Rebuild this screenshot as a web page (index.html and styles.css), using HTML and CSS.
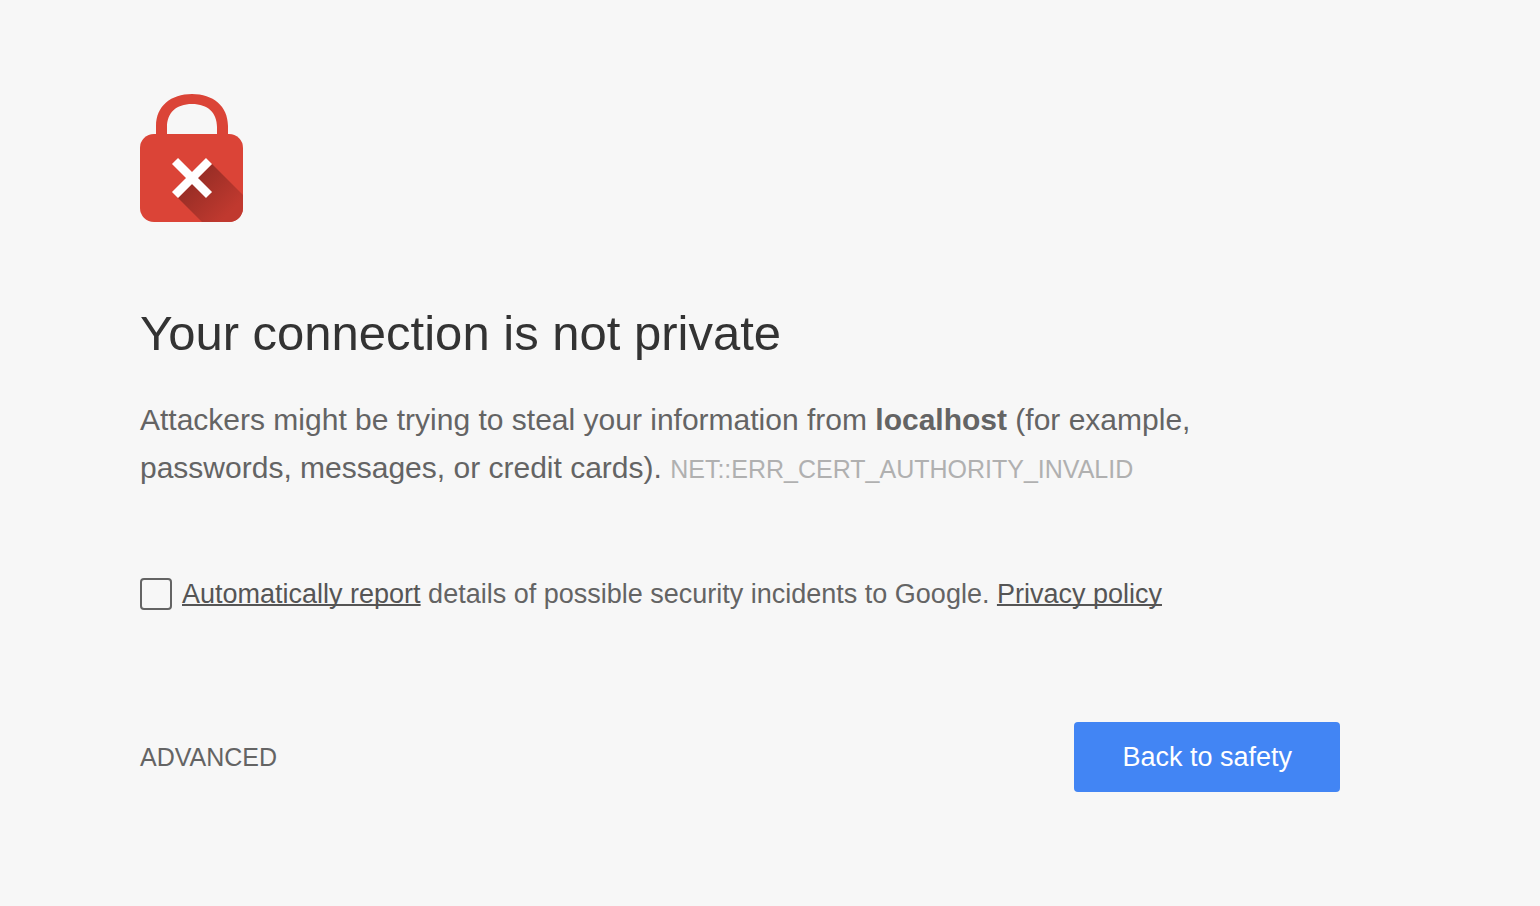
FILE: index.html
```html
<!DOCTYPE html>
<html lang="en">
<head>
    <meta charset="UTF-8">
    <meta name="viewport" content="width=device-width, initial-scale=1.0">
    <title>Privacy error</title>
    <link rel="stylesheet" href="styles.css">
</head>
<body>
    <main class="interstitial">
        <svg class="icon" viewBox="0 0 104 128" aria-hidden="true">
            <defs>
                <linearGradient id="shadow" gradientUnits="userSpaceOnUse" x1="52" y1="84" x2="88" y2="120">
                    <stop offset="0" stop-color="#962d25"/>
                    <stop offset="1" stop-color="#c0392f"/>
                </linearGradient>
                <clipPath id="lockBody">
                    <rect y="40" width="103" height="88" rx="14"/>
                </clipPath>
            </defs>
            <path d="M16 42V32C16 12 31 0 52 0s36 12 36 32v10H77V33C77 19 68 10 52 10S27 19 27 33v9z" fill="#db4437"/>
            <rect y="40" width="103" height="88" rx="14" fill="#db4437"/>
            <path d="M72 70l48 48v30H82L38 104z" fill="url(#shadow)" clip-path="url(#lockBody)"/>
            <path d="M35 67l34 34M69 67l-34 34" stroke="#fff" stroke-width="8.500"/>
        </svg>

        <h1>Your connection is not private</h1>
        <p class="message">Attackers might be trying to steal your information from <strong>localhost</strong> (for example, passwords, messages, or credit cards). <span class="error-code">NET::ERR_CERT_AUTHORITY_INVALID</span></p>

        <div class="report">
            <input type="checkbox" id="optIn">
            <label for="optIn"><a href="#">Automatically report</a> details of possible security incidents to Google. <a href="#">Privacy policy</a></label>
        </div>

        <div class="buttons">
            <button type="button" class="advanced">ADVANCED</button>
            <button type="button" class="primary">Back to safety</button>
        </div>
    </main>
</body>
</html>
```
FILE: styles.css
```css
body {
    margin: 0;
    padding: 94px 200px 40px 140px;
    background-color: #f7f7f7;
    color: #646464;
    font-family: "Liberation Sans", Arial, sans-serif;
}
.interstitial {
    max-width: 1200px;
}
.icon {
    display: block;
    width: 104px;
    height: 128px;
}
h1 {
    margin: 81px 0 33px;
    color: #333;
    font-size: 49px;
    font-weight: normal;
    line-height: 60px;
}
.message {
    margin: 0;
    font-size: 30px;
    line-height: 48px;
}
.error-code {
    color: #b0b0b0;
    font-size: 25px;
}
.report {
    display: flex;
    align-items: center;
    gap: 10px;
    margin-top: 81px;
    font-size: 27px;
    line-height: 40px;
}
.report input {
    appearance: none;
    box-sizing: border-box;
    flex: none;
    width: 32px;
    height: 32px;
    margin: 0;
    border: 2px solid #646464;
    border-radius: 4px;
}
.report input:checked {
    background-color: #646464;
}
.report a {
    color: #555;
    text-decoration-skip-ink: none;
    text-decoration-thickness: 2px;
}
.buttons {
    display: flex;
    align-items: center;
    justify-content: space-between;
    margin-top: 108px;
}
button {
    padding: 0;
    border: none;
    background: none;
    color: #646464;
    cursor: pointer;
    font-family: inherit;
    font-size: 25px;
}
.primary {
    height: 70px;
    padding: 0 48px;
    border-radius: 4px;
    background-color: #4285f4;
    color: #fff;
    font-size: 27px;
}
```
